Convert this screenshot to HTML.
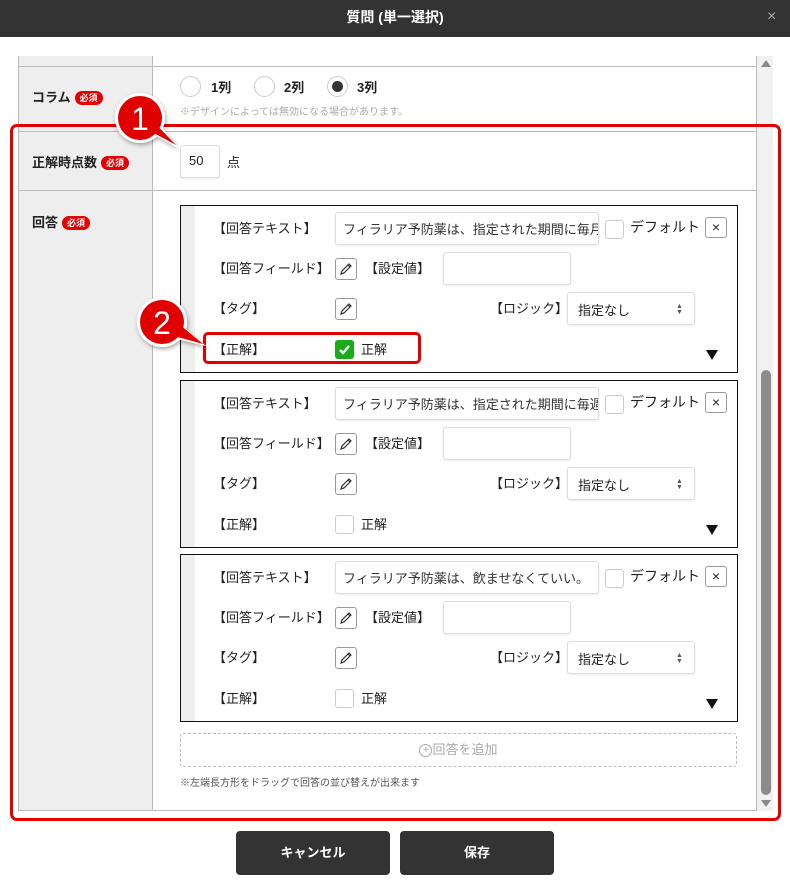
<!DOCTYPE html>
<html><head><meta charset="utf-8"><style>
*{box-sizing:border-box;margin:0;padding:0}
body{width:790px;height:891px;background:#fff;font-family:"Liberation Sans","Noto Sans CJK JP",sans-serif;font-size:13px;color:#222;position:relative;overflow:hidden}
.a{position:absolute}
.hdr{left:0;top:0;width:790px;height:37px;background:#333;color:#fff;font-weight:bold;font-size:14px;text-align:center;line-height:35px}
.lab{font-weight:bold;font-size:13px}
.req{display:inline-block;background:#e60000;color:#fff;font-size:9px;border-radius:8px;padding:0 5px;height:14px;line-height:14px;vertical-align:1px;margin-left:4px}
.in{border:1px solid #ddd;border-radius:3px;background:#fff;box-shadow:0 1px 2px rgba(0,0,0,.08)}
.pen{width:22px;height:22px;border:1px solid #999;border-radius:3px;background:#fff}
.cb{width:19px;height:19px;border:1px solid #ccc;border-radius:3px;background:#fff}
.btn{background:#333;color:#fff;border-radius:4px;text-align:center;line-height:44px;font-weight:bold;font-size:13px}
</style></head><body>
<div class="a hdr">質問 (単一選択)</div>
<div class="a" style="left:767px;top:8px;color:#aaa;font-size:16px">×</div>

<div class="a" style="left:18px;top:56px;width:135px;height:755px;background:#eee;border-left:1px solid #bbb;border-right:1px solid #bbb"></div>
<div class="a" style="left:18px;top:66px;width:739px;border-top:1px solid #bbb"></div>
<div class="a" style="left:18px;top:131px;width:739px;border-top:1px solid #bbb"></div>
<div class="a" style="left:18px;top:190px;width:739px;border-top:1px solid #bbb"></div>
<div class="a" style="left:18px;top:810px;width:739px;border-top:1px solid #bbb"></div>
<div class="a" style="left:756px;top:56px;height:755px;border-left:1px solid #bbb"></div>
<div class="a" style="left:757px;top:56px;width:16px;height:755px;background:#f1f1f1"></div>
<div class="a" style="left:761px;top:60px;width:0;height:0;border-left:5px solid transparent;border-right:5px solid transparent;border-bottom:7px solid #888"></div>
<div class="a" style="left:761px;top:370px;width:10px;height:425px;background:#8c8c8c;border-radius:5px"></div>
<div class="a" style="left:761px;top:800px;width:0;height:0;border-left:5px solid transparent;border-right:5px solid transparent;border-top:7px solid #888"></div>

<div class="a lab" style="left:32px;top:87px">コラム<span class="req">必須</span></div>
<div class="a lab" style="left:32px;top:152px">正解時点数<span class="req">必須</span></div>
<div class="a lab" style="left:32px;top:212px">回答<span class="req">必須</span></div>

<div class="a" style="left:180px;top:76px;width:21px;height:21px;border:1px solid #ccc;border-radius:50%"></div>
<div class="a lab" style="left:211px;top:77px">1列</div>
<div class="a" style="left:254px;top:76px;width:21px;height:21px;border:1px solid #ccc;border-radius:50%"></div>
<div class="a lab" style="left:284px;top:77px">2列</div>
<div class="a" style="left:327px;top:76px;width:21px;height:21px;border:1px solid #ccc;border-radius:50%"><div style="margin:4px;width:11px;height:11px;border-radius:50%;background:#333"></div></div>
<div class="a lab" style="left:357px;top:77px">3列</div>
<div class="a" style="left:180px;top:103px;font-size:10px;color:#aaa">※デザインによっては無効になる場合があります。</div>

<div class="a in" style="left:180px;top:145px;width:40px;height:33px;padding:7px 0 0 8px">50</div>
<div class="a" style="left:227px;top:152px">点</div>

<div id="blocks"></div>
<script>
var tx=["フィラリア予防薬は、指定された期間に毎月","フィラリア予防薬は、指定された期間に毎週","フィラリア予防薬は、飲ませなくていい。"];
var tops=[205,380,554],h="";
var P='<svg width="20" height="20"><path d="M5 15 L6 12 L13 5 L15 7 L8 14 Z M12 6 L14 8" stroke="#333" fill="none" stroke-width="1.2"/></svg>';
for(var i=0;i<3;i++){var t=tops[i];
h+='<div class="a" style="left:180px;top:'+t+'px;width:558px;height:168px;border:1px solid #111;background:#fff"><div style="position:absolute;left:0;top:0;width:14px;height:166px;background:#eee"></div></div>';
h+='<div class="a" style="left:213px;top:'+(t+13)+'px">【回答テキスト】</div>';
h+='<div class="a in" style="left:335px;top:'+(t+7)+'px;width:264px;height:33px;padding:6px 0 0 7px;overflow:hidden;white-space:nowrap;color:#333">'+tx[i]+'</div>';
h+='<div class="a cb" style="left:605px;top:'+(t+15)+'px"></div>';
h+='<div class="a" style="left:630px;top:'+(t+12)+'px;font-size:14px">デフォルト</div>';
h+='<div class="a" style="left:705px;top:'+(t+12)+'px;width:22px;height:21px;border:1px solid #999;border-radius:3px;text-align:center;line-height:18px;font-size:14px">×</div>';
h+='<div class="a" style="left:213px;top:'+(t+53)+'px">【回答フィールド】</div>';
h+='<div class="a pen" style="left:335px;top:'+(t+53)+'px">'+P+'</div>';
h+='<div class="a" style="left:365px;top:'+(t+53)+'px">【設定値】</div>';
h+='<div class="a in" style="left:443px;top:'+(t+47)+'px;width:128px;height:33px"></div>';
h+='<div class="a" style="left:213px;top:'+(t+93)+'px">【タグ】</div>';
h+='<div class="a pen" style="left:335px;top:'+(t+93)+'px">'+P+'</div>';
h+='<div class="a" style="left:490px;top:'+(t+93)+'px">【ロジック】</div>';
h+='<div class="a in" style="left:567px;top:'+(t+87)+'px;width:128px;height:33px;padding:7px 0 0 10px">指定なし<span style="position:absolute;left:108px;top:11px;font-size:7px;line-height:6px;color:#555">▲<br>▼</span></div>';
h+='<div class="a" style="left:213px;top:'+(t+134)+'px">【正解】</div>';
if(i==0){h+='<div class="a" style="left:335px;top:'+(t+135)+'px;width:19px;height:19px;background:#1aaa1a;border-radius:3px"><svg width="19" height="19"><path d="M5 10 L8 13 L14 6" stroke="#fff" stroke-width="2.4" fill="none"/></svg></div>';}
else h+='<div class="a cb" style="left:335px;top:'+(t+135)+'px"></div>';
h+='<div class="a" style="left:361px;top:'+(t+134)+'px">正解</div>';
h+='<div class="a" style="left:706px;top:'+(t+145)+'px;width:0;height:0;border-left:6px solid transparent;border-right:6px solid transparent;border-top:10px solid #111"></div>';
}
document.getElementById('blocks').innerHTML=h;
</script>

<div class="a" style="left:180px;top:733px;width:557px;height:34px;border:1px dashed #bbb;border-radius:3px;text-align:center;line-height:31px;color:#aaa;font-size:13px"><span style="display:inline-block;width:13px;height:13px;border:1px solid #aaa;border-radius:50%;font-size:10px;line-height:11px;vertical-align:1px">+</span>回答を追加</div>
<div class="a" style="left:180px;top:774px;font-size:10px;color:#555">※左端長方形をドラッグで回答の並び替えが出来ます</div>

<div class="a" style="left:10px;top:124px;width:771px;height:697px;border:3px solid #e50000;border-radius:7px"></div>
<div class="a" style="left:203px;top:332px;width:218px;height:32px;border:3px solid #e50000;border-radius:5px"></div>

<svg class="a" style="left:100px;top:80px" width="110" height="90"><defs><filter id="s"><feDropShadow dx="1" dy="2" stdDeviation="2" flood-opacity=".35"/></filter></defs>
<g filter="url(#s)"><path d="M40 18 L78 68 L55 55 Z" fill="#fff"/><circle cx="40" cy="38" r="25" fill="#fff"/><path d="M42 30 L76 65 L52 52 Z" fill="#e00000"/><circle cx="40" cy="38" r="22" fill="#e00000"/></g>
<text x="40" y="50" text-anchor="middle" fill="#fff" font-size="32" font-family="Liberation Sans">1</text></svg>
<svg class="a" style="left:122px;top:284px" width="110" height="90"><g filter="url(#s)"><path d="M40 25 L84 62 L55 55 Z" fill="#fff"/><circle cx="40" cy="38" r="25" fill="#fff"/><path d="M45 30 L81 60 L52 52 Z" fill="#e00000"/><circle cx="40" cy="38" r="22" fill="#e00000"/></g>
<text x="40" y="50" text-anchor="middle" fill="#fff" font-size="32" font-family="Liberation Sans">2</text></svg>

<div class="a btn" style="left:236px;top:831px;width:154px;height:44px">キャンセル</div>
<div class="a btn" style="left:400px;top:831px;width:154px;height:44px">保存</div>
</body></html>
